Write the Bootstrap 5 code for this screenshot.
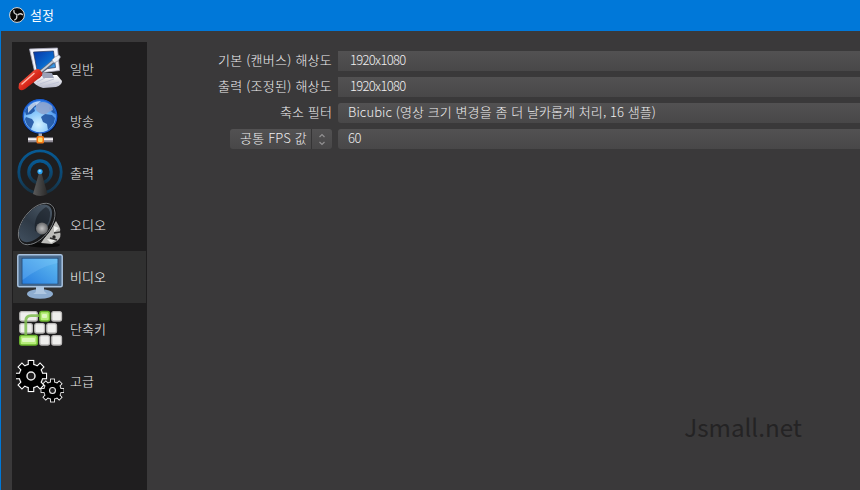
<!DOCTYPE html>
<html lang="ko">
<head>
<meta charset="utf-8">
<title>설정</title>
<meta name="viewport" content="width=device-width, initial-scale=1">
<link href="https://cdn.jsdelivr.net/npm/bootstrap@5.3.0/dist/css/bootstrap.min.css" rel="stylesheet">
<style>
  body { width: 860px; height: 490px; background: #3a393a; color: #f0eff0; font: 300 13px/20px "Noto Sans CJK KR", sans-serif; }
  .window-frame { height: 490px; border-left: 1px solid #0078d7; }
  .title-strip { height: 31px; margin-left: -1px; padding: 0 0 1px 9px; background: #0078d9; color: #fff; font-weight: 400; }
  .title-strip span { margin-left: 5px; }
  .side-menu { width: 135px; height: 448px; margin: 11px 0 0 11px; padding: 1px; background: #1f1e1f; }
  .side-menu .side-item { height: 52px; padding: 0 0 0 3px; border: 0; border-radius: 0; background: transparent; color: #f0eff0; }
  .side-menu .side-item.active { background: #303030; color: #fff; }
  .side-item span { margin-left: 6px; }
  .side-item svg { width: 48px; height: 48px; flex: none; }
  .settings-form { margin: 20px 0 0 65px; gap: 6px; min-width: 0; }
  .setting-row { height: 20px; gap: 6px; }
  .setting-label { width: 120px; white-space: nowrap; line-height: 18px; }
  .field-box { height: 20px; padding-left: 10px; border-radius: 3px 0 0 3px; background: linear-gradient(#525152, #484748); white-space: nowrap; line-height: 18px; }
  .field-edit { padding-left: 12px; border-radius: 0; }
  .fps-select { width: 102px; height: 20px; border-radius: 3px; background: linear-gradient(#525152, #484748); line-height: 18px; }
  .fps-text { width: 82px; padding-left: 10px; border-right: 1px solid #353435; white-space: nowrap; }
  .fit { display: inline-block; white-space: nowrap; }
  .site-mark { right: 58px; bottom: 47px; color: #242324; font: 400 24.2px/32px "Noto Sans CJK KR", sans-serif; }
</style>
<script src="https://cdn.jsdelivr.net/npm/bootstrap@5.3.0/dist/js/bootstrap.bundle.min.js"></script>
</head>
<body class="overflow-hidden position-relative">
<div class="window-frame d-flex flex-column">
  <header class="title-strip d-flex align-items-center flex-shrink-0">
    <svg width="16" height="16" viewBox="0 0 16 16"><circle cx="8" cy="8" r="7.400" fill="#080808" stroke="#ddd" stroke-width="1"/><g fill="none" stroke="#d5d5d5" stroke-width="1.300"><path id="blade" d="M8 7.500Q4.200 6.600 5 3"/><use href="#blade" transform="rotate(120 8 8)"/><use href="#blade" transform="rotate(240 8 8)"/></g></svg>
    <span>설정</span>
  </header>
  <div class="d-flex flex-grow-1">
    <nav class="side-menu list-group rounded-0 flex-shrink-0">
      <a class="side-item list-group-item d-flex align-items-center">
        <svg viewBox="0 0 48 48">
          <defs>
            <linearGradient id="screenBlue" x1="0" y1="0" x2="1" y2="1"><stop offset="0" stop-color="#0736a8"/><stop offset=".6" stop-color="#0868cc"/><stop offset="1" stop-color="#58b5f5"/></linearGradient>
            <linearGradient id="silver" x1="0" y1="0" x2="0" y2="1"><stop offset="0" stop-color="#fff"/><stop offset="1" stop-color="#b8bbcc"/></linearGradient>
            <linearGradient id="redGrip" x1="0" y1="0" x2="1" y2="1"><stop offset="0" stop-color="#ff8a70"/><stop offset=".5" stop-color="#dc2b1c"/><stop offset="1" stop-color="#8c0b05"/></linearGradient>
          </defs>
          <path d="M17 36L27 30H41L46 36Q46 40 40 42L27 43Q18 40 17 36Z" fill="url(#silver)"/>
          <path d="M21 37L29 33M24 39L38 34M29 41L43 37" stroke="#c0c5d8"/>
          <path d="M25 28H36L38 33H27Z" fill="#9ca2b8"/>
          <path d="M13.500 4L41.500 3L43.500 25.500L19 28.500Z" fill="#f3f3fb" stroke="#a9aabd" stroke-width=".8"/>
          <path d="M17.500 7L37.500 6L39.500 22.500L21 25Z" fill="url(#screenBlue)" stroke="#26365d" stroke-width=".7"/>
          <path d="M23 28.500L38 16" stroke="#59647a" stroke-width="3.600"/><path d="M23 28L38 15.500" stroke="#c4ccd6" stroke-width="1.800"/>
          <path d="M36 15L39 12L43 10L44.500 12L42 16L38 18Z" fill="#eef1f6" stroke="#888da0" stroke-width=".6"/>
          <path d="M3 38.500L15 28Q19 23.500 23 24L26.500 28Q26 32 22 34L9 44Q4 47 2.500 43Z" fill="url(#redGrip)"/>
          <path d="M6 39L18 28.500" stroke="#ffb6a8" stroke-width="1.500" stroke-linecap="round"/>
        </svg>
        <span>일반</span>
      </a>
      <a class="side-item list-group-item d-flex align-items-center">
        <svg viewBox="0 0 48 48">
          <defs><radialGradient id="ocean" cx=".45" cy=".75" r=".7"><stop offset="0" stop-color="#d4f2ff"/><stop offset=".55" stop-color="#85c5fa"/><stop offset="1" stop-color="#2f7ce6"/></radialGradient></defs>
          <circle cx="24.300" cy="19.600" r="17.800" fill="#071022"/>
          <circle cx="24" cy="19.300" r="16.700" fill="url(#ocean)" stroke="#1e5fd0" stroke-width="1.400"/>
          <path d="M9 14Q12 8 19 6L22 8L18 11L19 14L15 17L10 18ZM10 20L16 22L18 25L15 32Q10 28 9 22ZM25 20L29 17L36 18L39 21L38 26L35 30L32 33L31 27L27 25ZM34 8L38 12L40 17L37 16L33 12Z" fill="#1a4d9d" opacity=".85"/>
          <path d="M20 7Q28 2 36 9L37 13Q32 15 30 17Q24 18 20 13Z" fill="#8fa5cf" opacity=".9"/>
          <path d="M12 10Q17 4 25 4Q18 9 12 16Z" fill="#fff" opacity=".65"/>
          <path d="M22.500 36.500H26V40H22.500Z" fill="#a9acb7"/>
          <rect x="12" y="40.300" width="25" height="5" fill="#8b8791"/><rect x="12" y="41.200" width="25" height="2" fill="#f2f0f3"/>
          <rect x="20.500" y="39" width="7.500" height="7.500" rx="1.500" fill="#f27616"/><rect x="22" y="40.500" width="4.500" height="4.500" rx="1" fill="#ffd665"/>
        </svg>
        <span>방송</span>
      </a>
      <a class="side-item list-group-item d-flex align-items-center">
        <svg viewBox="0 0 48 48">
          <defs><linearGradient id="mast"><stop offset="0" stop-color="#5b5b5b"/><stop offset="1" stop-color="#292929"/></linearGradient>
          <linearGradient id="wave" x1="0" y1="0" x2="0" y2="1"><stop offset="0" stop-color="#075a94"/><stop offset=".6" stop-color="#0c4770"/><stop offset="1" stop-color="#19303f"/></linearGradient></defs>
          <circle cx="24" cy="23" r="21.200" fill="none" stroke="url(#wave)" stroke-width="2.800"/>
          <circle cx="24" cy="23" r="11.200" fill="none" stroke="url(#wave)" stroke-width="3.200"/>
          <path d="M23 24H25.500L31.500 45Q24 49 17 45Z" fill="url(#mast)"/>
          <circle cx="24" cy="22.600" r="2.600" fill="#2aa0ee"/><circle cx="23.700" cy="22" r="1.200" fill="#8ad4ff"/>
        </svg>
        <span>출력</span>
      </a>
      <a class="side-item list-group-item d-flex align-items-center">
        <svg viewBox="0 0 48 48">
          <defs><linearGradient id="cone" x1="0" y1="0" x2="1" y2="0"><stop offset="0" stop-color="#3f4d5c"/><stop offset=".45" stop-color="#2e3945"/><stop offset="1" stop-color="#4a5866"/></linearGradient>
          <radialGradient id="dust"><stop offset="0" stop-color="#c2c2c2"/><stop offset="1" stop-color="#68696b"/></radialGradient></defs>
          <ellipse cx="28" cy="44" rx="16" ry="2.500" fill="#0b0b0b"/>
          <path d="M25 42L40 20L43 25Q45 28 44 31Q46 36 41 40L36 43Z" fill="#bcbcb9"/>
          <path d="M38 25L43 27L38 31ZM31 38L39 39L35 42Z" fill="#f1f1ee"/><path d="M38 32L44 31M34 37L41 39" stroke="#333" stroke-width="1.500"/><circle cx="38" cy="36" r="1.700" fill="#222"/>
          <ellipse cx="21.800" cy="23.500" rx="24.500" ry="13.800" transform="rotate(-52 21.800 23.500)" fill="#0b0b0c"/>
          <ellipse cx="20.700" cy="23" rx="24" ry="13.800" transform="rotate(-52 20.700 23)" fill="#18191b" stroke="#7b7e81" stroke-width=".9"/>
          <ellipse cx="19.500" cy="22.300" rx="22" ry="12" transform="rotate(-52 19.500 22.300)" fill="url(#cone)"/>
          <path d="M30 6Q17 14 19 30L26 33L33 20Q36 8 30 6Z" fill="#0d1117" opacity=".5"/>
          <circle cx="26" cy="27.500" r="6" fill="url(#dust)"/>
        </svg>
        <span>오디오</span>
      </a>
      <a class="side-item active list-group-item mt-0 d-flex align-items-center">
        <svg viewBox="0 0 48 48">
          <defs><linearGradient id="display" x1="1" y1="0" x2="0" y2="1"><stop offset="0" stop-color="#62bdf1"/><stop offset="1" stop-color="#287ee0"/></linearGradient></defs>
          <ellipse cx="24" cy="41" rx="13" ry="4.800" fill="#8eadd0"/><path d="M20 33H28V38Q30 40 31 41H17Q20 40 20 38Z" fill="#afc7e1"/>
          <rect x="1.800" y="1.800" width="44.400" height="32" rx="1.500" fill="#4b6c8f" stroke="#a7c1dd" stroke-width="1.500"/>
          <rect x="5.600" y="4.800" width="36.800" height="26.500" fill="#234b78"/>
          <rect x="6.500" y="5.700" width="35" height="25" fill="url(#display)"/>
          <path d="M6.500 5.700H41.500V10Q23 14 6.500 27Z" fill="#91ceff" opacity=".25"/>
        </svg>
        <span>비디오</span>
      </a>
      <a class="side-item list-group-item d-flex align-items-center">
        <svg viewBox="0 0 48 48">
          <g fill="#efefed" stroke="#bbb9b8" stroke-width="1.300">
            <rect x="3.800" y="6.600" width="17.500" height="9.400" rx="2"/><rect x="35.800" y="6.600" width="9.700" height="9.400" rx="2"/>
            <rect x="3.800" y="18.600" width="12.500" height="9.400" rx="2"/><rect x="18.800" y="18.600" width="9.700" height="9.400" rx="2"/><rect x="30.800" y="18.600" width="9.700" height="9.400" rx="2"/>
            <rect x="23.800" y="30.600" width="9.700" height="9.400" rx="2"/><rect x="35.800" y="30.600" width="9.700" height="9.400" rx="2"/>
          </g>
          <g fill="#b7ee7a" stroke="#6db82e" stroke-width="1.500"><rect x="23.800" y="6.600" width="9.700" height="9.400" rx="2"/><rect x="3.800" y="30.600" width="17.500" height="9.400" rx="2"/></g>
          <g fill="#def8be"><rect x="26" y="9" width="5" height="4" rx="1"/><rect x="6" y="33" width="13" height="4" rx="1"/></g>
          <path d="M9.800 30V16Q9.800 10.700 15 10.700H23" fill="none" stroke="#7fbd4d" stroke-width="2.800" opacity=".85"/>
        </svg>
        <span>단축키</span>
      </a>
      <a class="side-item list-group-item d-flex align-items-center">
        <svg viewBox="0 0 48 48">
          <defs>
            <g id="gearShape"><circle r="11.300"/><rect id="teeth" x="-2.200" y="-15" width="4.400" height="30"/><use href="#teeth" transform="rotate(45)"/><use href="#teeth" transform="rotate(90)"/><use href="#teeth" transform="rotate(135)"/></g>
            <g id="gear"><use href="#gearShape" fill="#fff" stroke="#fff" stroke-width="2.200"/><use href="#gearShape" fill="#000"/><circle r="4" fill="#1f1e1f" stroke="#e8e8e8" stroke-width="1.500"/></g>
          </defs>
          <use href="#gear" transform="translate(15 19)"/><use href="#gear" transform="translate(36.500 33.500) scale(.74)"/>
        </svg>
        <span>고급</span>
      </a>
    </nav>
    <main class="settings-form d-flex flex-column flex-grow-1">
      <div class="setting-row d-flex"><label class="setting-label text-end"><span class="fit" data-width="114">기본 (캔버스) 해상도</span></label><div class="field-box field-edit flex-grow-1"><span class="fit" data-width="55.5">1920x1080</span></div></div>
      <div class="setting-row d-flex"><label class="setting-label text-end"><span class="fit" data-width="114">출력 (조정된) 해상도</span></label><div class="field-box field-edit flex-grow-1"><span class="fit" data-width="55.5">1920x1080</span></div></div>
      <div class="setting-row d-flex"><label class="setting-label text-end"><span class="fit" data-width="52">축소 필터</span></label><div class="field-box flex-grow-1"><span class="fit" data-width="308">Bicubic (영상 크기 변경을 좀 더 날카롭게 처리, 16 샘플)</span></div></div>
      <div class="setting-row d-flex">
        <div class="setting-label d-flex justify-content-end"><div class="fps-select d-flex"><div class="fps-text"><span class="fit" data-width="67">공통 FPS 값</span></div><svg width="20" height="20" viewBox="0 0 20 20" fill="none" stroke="#929192" stroke-width="1.200"><path d="M7.500 8L10 5.500L12.500 8M7.500 13L10 15.500L12.500 13"/></svg></div></div>
        <div class="field-box flex-grow-1"><span class="fit" data-width="13">60</span></div>
      </div>
    </main>
  </div>
</div>
<div class="site-mark position-absolute">Jsmall.net</div>
<script>
  document.querySelectorAll('.fit').forEach(function (el) {
    var n = Array.from(el.textContent).length;
    var diff = parseFloat(el.dataset.width) - el.getBoundingClientRect().width;
    el.style.letterSpacing = (diff / n) + 'px';
  });
</script>
</body>
</html>
